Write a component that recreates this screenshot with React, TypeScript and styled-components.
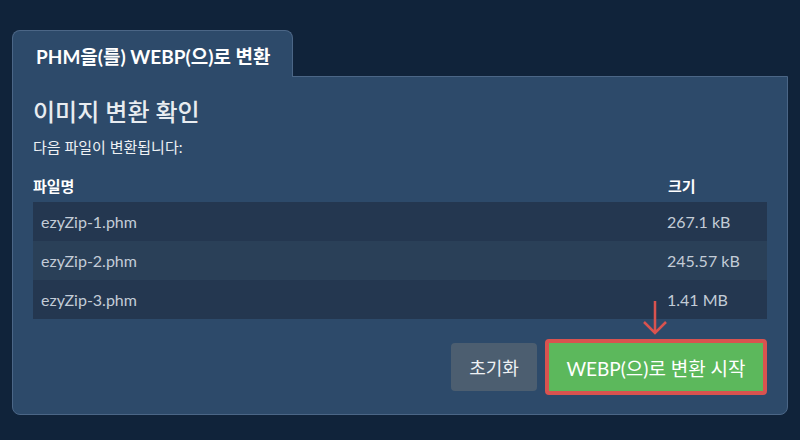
import styled, { createGlobalStyle } from "styled-components";

const GlobalStyle = createGlobalStyle`
  html, body {
    margin: 0;
    padding: 0;
    background: #10233a;
    font-family: Lato, "Noto Sans CJK KR", sans-serif;
  }
`;

const Page = styled.div`
  width: 800px;
  height: 440px;
  box-sizing: border-box;
  padding: 30px 12px 0 12px;
`;

const Tab = styled.div`
  display: inline-block;
  position: relative;
  z-index: 1;
  box-sizing: border-box;
  width: 281px;
  height: 47px;
  margin-bottom: -1px;
  padding: 11px 0 0 23px;
  background: #2d4a6a;
  border: 1px solid #4b6686;
  border-bottom: none;
  border-radius: 8px 8px 0 0;
  color: #ffffff;
  font-size: 19px;
  font-weight: 700;
`;

const Panel = styled.div`
  box-sizing: border-box;
  height: 339px;
  padding: 18px 20px 0 20px;
  background: #2d4a6a;
  border: 1px solid #4b6686;
  border-radius: 0 0 8px 8px;
  display: flex;
  flex-direction: column;
`;

const Title = styled.h2`
  margin: 0;
  color: #e8ecf0;
  font-size: 24px;
  font-weight: 500;
  line-height: 34px;
`;

const Subtitle = styled.p`
  margin: 8px 0 0 0;
  color: #eef1f4;
  font-size: 15px;
  line-height: 20px;
`;

const Table = styled.div`
  margin-top: 18px;
  display: flex;
  flex-direction: column;
`;

const Row = styled.div<{ $shade?: "dark" | "light" }>`
  display: grid;
  grid-template-columns: 1fr 100px;
  height: 39px;
  align-items: center;
  padding-left: 8px;
  background: ${(p) =>
    p.$shade === "dark" ? "#243750" : p.$shade === "light" ? "#2a4058" : "transparent"};
  color: #c3ccd7;
  font-size: 16px;
`;

const HeadRow = styled(Row)`
  height: auto;
  padding: 0 0 6px 0;
  color: #ffffff;
  font-weight: 700;
  font-size: 15px;
`;

const SizeCell = styled.span<{ $head?: boolean }>`
  margin-left: ${(p) => (p.$head ? "1px" : "0")};
`;

const Actions = styled.div`
  margin-top: 20px;
  display: flex;
  justify-content: flex-end;
  align-items: center;
  gap: 8px;
`;

const ResetButton = styled.button`
  box-sizing: border-box;
  width: 86px;
  height: 48px;
  border: none;
  border-radius: 4px;
  background: #4c5e70;
  color: #eef1f4;
  font-family: Lato, "Noto Sans CJK KR", sans-serif;
  font-size: 18px;
`;

const StartWrap = styled.div`
  position: relative;
`;

const StartButton = styled.button`
  box-sizing: border-box;
  width: 222px;
  height: 56px;
  border: 4px solid #d9534f;
  border-radius: 4px;
  background: #5cb85c;
  color: #ffffff;
  font-family: Lato, "Noto Sans CJK KR", sans-serif;
  font-size: 19px;
`;

const Arrow = styled.svg`
  position: absolute;
  left: 96px;
  top: -40px;
`;

const files = [
  { name: "ezyZip-1.phm", size: "267.1 kB" },
  { name: "ezyZip-2.phm", size: "245.57 kB" },
  { name: "ezyZip-3.phm", size: "1.41 MB" },
];

export default function App() {
  return (
    <Page>
      <GlobalStyle />
      <Tab>PHM을(를) WEBP(으)로 변환</Tab>
      <Panel>
        <Title>이미지 변환 확인</Title>
        <Subtitle>다음 파일이 변환됩니다:</Subtitle>
        <Table>
          <HeadRow>
            <span>파일명</span>
            <SizeCell $head>크기</SizeCell>
          </HeadRow>
          {files.map((f, i) => (
            <Row key={f.name} $shade={i % 2 === 0 ? "dark" : "light"}>
              <span>{f.name}</span>
              <SizeCell>{f.size}</SizeCell>
            </Row>
          ))}
        </Table>
        <Actions>
          <ResetButton>초기화</ResetButton>
          <StartWrap>
            <Arrow width="28" height="38" viewBox="0 0 28 38">
              <path
                d="M14 2 V34 M3 23 L14 34 L25 23"
                fill="none"
                stroke="#d9534f"
                strokeWidth="2.5"
              />
            </Arrow>
            <StartButton>WEBP(으)로 변환 시작</StartButton>
          </StartWrap>
        </Actions>
      </Panel>
    </Page>
  );
}
